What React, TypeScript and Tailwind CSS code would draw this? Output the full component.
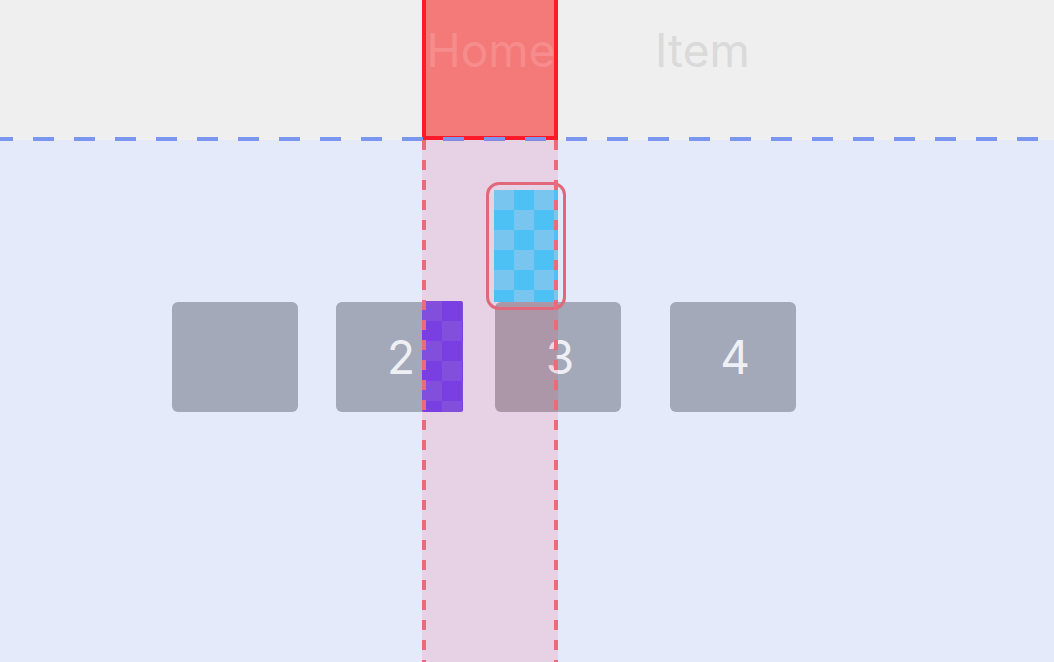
import React from "react"

const font = { fontFamily: "Inter, 'Noto Sans', sans-serif" }

function Tile({ label, className }: { label?: string; className: string }) {
  return (
    <div
      className={`flex h-[110px] w-[126px] shrink-0 items-center justify-center rounded-[6px] bg-[#a3a9b8] text-[46px] font-normal leading-none text-[#eef0f6] ${className}`}
    >
      {label}
    </div>
  )
}

export default function App() {
  return (
    <div className="relative h-[662px] w-full overflow-hidden bg-[#e4eafa]" style={font}>
      {/* Top tab bar */}
      <header className="relative flex h-[140px] items-start bg-[#efefef]">
        <div className="ml-[422px] flex h-full w-[136px] justify-center border-x-4 border-b-4 border-[#ff1a2a] bg-[#f47a7a] pl-[2px] pt-[27px] text-[46px] leading-none text-[#f68c8c]">
          Home
        </div>
        <span className="ml-[97px] pt-[27px] text-[46px] leading-none text-[#dadada]">Item</span>
        <div className="absolute bottom-[-1px] left-0 h-[4px] w-full bg-[repeating-linear-gradient(90deg,#7b96ef_0_13px,transparent_13px_33px,#7b96ef_33px_41px)]" />
      </header>

      {/* Tiles */}
      <main className="flex items-start pl-[172px] pt-[162px]">
        <Tile className="" />
        <Tile label="2" className="ml-[38px] pl-[4px]" />
        <Tile label="3" className="ml-[33px] pl-[4px]" />
        <Tile label="4" className="ml-[49px] pl-[4px]" />
      </main>

      {/* Highlighted column overlay */}
      <div className="pointer-events-none absolute bottom-0 left-[422px] top-[140px] w-[136px] bg-[rgba(255,0,40,0.1)]">
        {/* dragged purple item */}
        <div className="absolute left-0 top-[161px] h-[111px] w-[41px] rounded-[2px] bg-[conic-gradient(#7a3fe3_25%,#824fdc_0_50%,#7a3fe3_0_75%,#824fdc_0)] bg-size-[40px_40px]" />
        {/* blue drop indicator */}
        <div className="absolute left-[64px] top-[42px] h-[128px] w-[80px] rounded-[13px] border-[3px] border-[#e0687a] p-[5px]">
          <div className="h-full w-full bg-[conic-gradient(#4ec1f4_25%,#78c6ef_0_50%,#4ec1f4_0_75%,#78c6ef_0)] bg-size-[40px_40px]" />
        </div>
        <div className="absolute left-0 top-0 h-full w-[4px] bg-[repeating-linear-gradient(180deg,#ec6b7a_0_10px,transparent_10px_20px)]" />
        <div className="absolute right-0 top-0 h-full w-[4px] bg-[repeating-linear-gradient(180deg,#ec6b7a_0_10px,transparent_10px_20px)]" />
      </div>
    </div>
  )
}
